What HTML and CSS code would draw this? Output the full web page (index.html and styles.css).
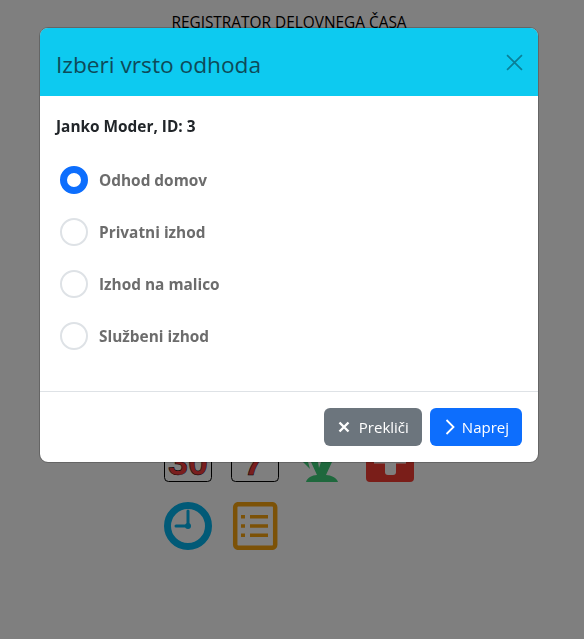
FILE: index.html
```html
<!DOCTYPE html>
<html lang="en">
<head>
  <meta charset="UTF-8">
  <title>Registrator delovnega časa</title>
  <link rel="stylesheet" href="styles.css">
</head>
<body>

<h1 class="page-title">REGISTRATOR DELOVNEGA ČASA</h1>

<div class="tiles">
  <svg class="tile" viewBox="0 0 48 48">
    <rect x="0.5" y="0.5" width="47" height="47" rx="4" fill="#fff" stroke="#000"/>
    <text class="tile-num" x="24" y="41" text-anchor="middle">30</text>
  </svg>
  <svg class="tile" viewBox="0 0 48 48">
    <rect x="0.5" y="0.5" width="47" height="47" rx="4" fill="#fff" stroke="#000"/>
    <text class="tile-num tile-num-slant" x="24" y="41" text-anchor="middle">7</text>
  </svg>
  <svg class="tile" viewBox="0 0 48 48">
    <path d="M7 48c1-4 6-7 11-7l-6-13h7l1 6 2-6h11l-6 13c5 0 11 3 12 7z" fill="#3ed07a"/>
    <path d="M4 28h5l2 7z" fill="#3ed07a"/>
  </svg>
  <svg class="tile" viewBox="0 0 48 48">
    <path d="M0 0h48v44a4 4 0 0 1-4 4H4a4 4 0 0 1-4-4z" fill="#f53d32"/>
    <rect x="8" y="0" width="32" height="29.5" fill="#fff"/>
    <rect x="19" y="0" width="11" height="41" rx="3" fill="#fff"/>
  </svg>
  <svg class="tile" viewBox="0 0 48 48">
    <circle cx="24" cy="24" r="20.5" fill="none" stroke="#02b4ee" stroke-width="7"/>
    <path d="M24 9v15H12" fill="none" stroke="#02b4ee" stroke-width="3" stroke-linecap="round"/>
    <circle cx="24" cy="24" r="3" fill="#02b4ee"/>
  </svg>
  <svg class="tile" viewBox="0 0 48 48">
    <rect x="4.2" y="2.2" width="40" height="43.6" rx="3" fill="none" stroke="#f9a40f" stroke-width="4.5"/>
    <path d="M10 14.7h4M19 14.7h18M10 24h4M19 24h18M10 33.3h4M19 33.3h18" fill="none" stroke="#f9a40f" stroke-width="3.5"/>
  </svg>
</div>

<div class="backdrop"></div>

<div class="modal">
  <div class="modal-header">
    <h2 class="modal-title">Izberi vrsto odhoda</h2>
    <svg class="modal-close" viewBox="0 0 16 16">
      <path d="M1 1l14 14M15 1L1 15" fill="none" stroke="#0a7f97" stroke-width="1.6"/>
    </svg>
  </div>
  <div class="modal-body">
    <p class="employee">Janko Moder, ID: 3</p>
    <div class="choice">
      <span class="radio radio-on"></span>
      <span class="choice-label">Odhod domov</span>
    </div>
    <div class="choice">
      <span class="radio"></span>
      <span class="choice-label">Privatni izhod</span>
    </div>
    <div class="choice">
      <span class="radio"></span>
      <span class="choice-label">Izhod na malico</span>
    </div>
    <div class="choice">
      <span class="radio"></span>
      <span class="choice-label">Službeni izhod</span>
    </div>
  </div>
  <div class="modal-footer">
    <button class="btn btn-gray">
      <svg class="btn-icon" viewBox="0 0 16 16"><path d="M3.5 3.5l9 9M12.5 3.5l-9 9" fill="none" stroke="#fff" stroke-width="2.4"/></svg>
      Prekliči
    </button>
    <button class="btn btn-blue">
      <svg class="btn-icon" viewBox="0 0 16 16"><path d="M4.5 1l7 7-7 7" fill="none" stroke="#fff" stroke-width="1.8"/></svg>
      Naprej
    </button>
  </div>
</div>

</body>
</html>
```

FILE: styles.css
```css
* {
  box-sizing: border-box;
  margin: 0;
  padding: 0;
}

body {
  font-family: 'Open Sans', sans-serif;
  background: #fff;
  color: #212529;
  height: 639px;
  overflow: hidden;
}

.page-title {
  padding: 13px 6px 0 0;
  text-align: center;
  font-size: 15.4px;
  line-height: 20px;
  font-weight: 400;
  color: #000;
}

.tiles {
  display: grid;
  grid-template-columns: repeat(4, 48px);
  gap: 20px 19.3px;
  width: 250px;
  margin: 401px 0 0 164px;
}

.tile {
  display: block;
  width: 48px;
  height: 48px;
}

.tile-num {
  font-family: 'Liberation Sans', sans-serif;
  font-size: 36px;
  font-weight: 700;
  fill: #f53d3d;
  stroke: #000;
  stroke-width: 0.5;
}

.tile-num-slant {
  font-style: italic;
}

.backdrop {
  position: fixed;
  top: 0;
  left: 0;
  width: 100vw;
  height: 100vh;
  background: rgba(0, 0, 0, 0.5);
}

.modal {
  position: absolute;
  top: 28px;
  left: 40px;
  width: 498px;
  height: 434px;
  display: flex;
  flex-direction: column;
  background: #fff;
  border-radius: 8px;
  outline: 1px solid rgba(0, 0, 0, 0.2);
  overflow: hidden;
}

.modal-header {
  height: 68px;
  display: flex;
  align-items: center;
  justify-content: space-between;
  padding: 0 15.5px 0 16px;
  background: #0dcaf0;
}

.modal-title {
  font-size: 22.7px;
  line-height: 30px;
  padding-top: 5px;
  font-weight: 400;
  color: #0e4a59;
}

.modal-close {
  width: 17px;
  height: 17px;
}

.modal-body {
  flex: 1;
  padding: 20px 16px 0;
}

.employee {
  font-size: 15.4px;
  line-height: 22px;
  font-weight: 700;
  margin-bottom: 28px;
}

.choice {
  display: flex;
  align-items: center;
  gap: 11px;
  height: 28px;
  margin: 0 0 24px 4px;
}

.radio {
  width: 28px;
  height: 28px;
  border: 2px solid #dee2e6;
  border-radius: 50%;
  background: #fff;
}

.radio-on {
  border: 7.5px solid #0d6efd;
}

.choice-label {
  font-size: 15.4px;
  font-weight: 700;
  color: #6c6c6c;
}

.modal-footer {
  height: 71px;
  display: flex;
  justify-content: flex-end;
  gap: 8px;
  padding: 16px 16px 0;
  border-top: 1px solid #dee2e6;
}

.btn {
  height: 38px;
  display: flex;
  align-items: center;
  padding: 0 13px 0 12px;
  border: none;
  border-radius: 6px;
  font-family: inherit;
  font-size: 15px;
  color: #fff;
}

.btn-gray {
  gap: 6.5px;
  background: #6c757d;
}

.btn-blue {
  gap: 4px;
  background: #0d6efd;
}

.btn-icon {
  width: 16px;
  height: 16px;
}
```
